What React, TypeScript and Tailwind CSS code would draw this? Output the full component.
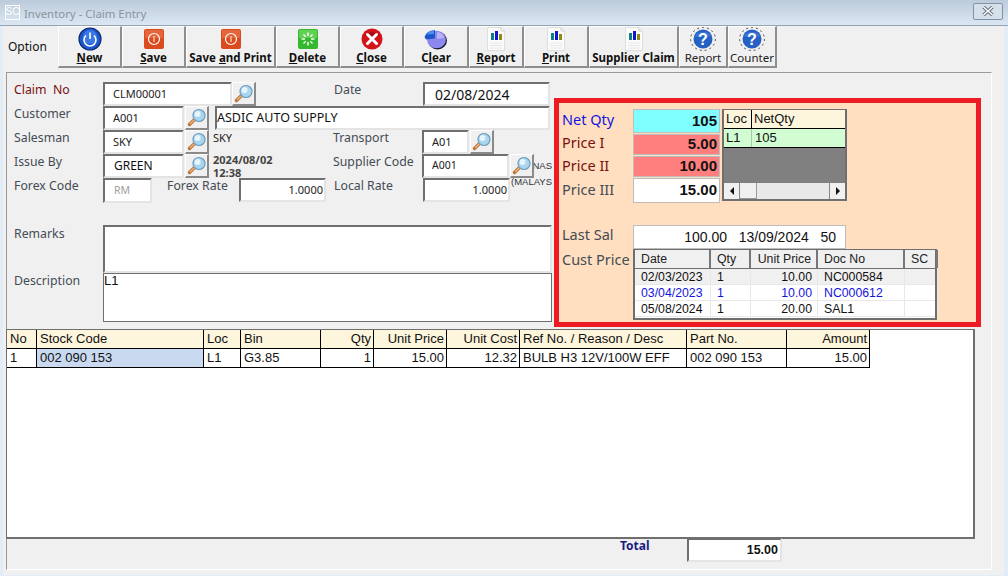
import React from "react";

const tahoma = "font-['Noto_Sans',sans-serif]";
const arial = "font-['Liberation_Sans',sans-serif]";

const sunken = "border-t-2 border-l-2 border-t-[#6f6f6f] border-l-[#6f6f6f] border-r-2 border-b-2 border-r-[#e4e4e4] border-b-[#e4e4e4]";

function Lens() {
  return (
    <svg width="20" height="20" viewBox="0 0 20 20">
      <path d="M8 11 L2.5 16.5" stroke="#b9773a" strokeWidth="3.4" strokeLinecap="round" />
      <path d="M7.5 11.5 L3.5 15.5" stroke="#f0b67c" strokeWidth="1.2" strokeLinecap="round" />
      <circle cx="12" cy="7.5" r="6" fill="#a9d6ee" stroke="#6d9dbd" strokeWidth="1.2" />
      <circle cx="10.5" cy="6" r="3" fill="#e6f5fc" />
    </svg>
  );
}

function Look({ w = "w-[24px]", h = "h-[24px]", cls = "" }: { w?: string; h?: string; cls?: string }) {
  return (
    <div className={`${w} ${h} ${cls} shrink-0 flex items-center justify-center bg-[#f0f0f0] border-r-2 border-b-2 border-r-[#8a8a8a] border-b-[#8a8a8a] border-t border-l border-t-white border-l-white`}>
      <Lens />
    </div>
  );
}

function Field({ w, h = "h-[24px]", text, cls = "", align = "" }: { w: string; h?: string; text?: string; cls?: string; align?: string }) {
  return (
    <div className={`${w} ${h} ${sunken} bg-white shrink-0 flex items-center overflow-hidden whitespace-nowrap ${align} ${cls}`}>
      {text}
    </div>
  );
}

function Label({ w, text, cls = "text-[#444c55]", top = "pt-[0px]" }: { w: string; text: string; cls?: string; top?: string }) {
  return <div className={`${w} ${top} shrink-0 ${tahoma} text-[12.3px] leading-[16px] whitespace-pre ${cls}`}>{text}</div>;
}

function PowerIcon() {
  return (
    <svg width="24" height="24" viewBox="0 0 24 24">
      <circle cx="12" cy="12" r="11" fill="#1e58d0" stroke="#0c2a70" strokeWidth="1.2" />
      <circle cx="12" cy="10" r="7" fill="#4f8df0" opacity="0.6" />
      <path d="M8 8.5 A6 6 0 1 0 16 8.5" fill="none" stroke="#fff" strokeWidth="1.6" />
      <path d="M12 5.5 V12" stroke="#fff" strokeWidth="1.6" />
    </svg>
  );
}
function SaveIcon() {
  return (
    <svg width="20" height="20" viewBox="0 0 20 20">
      <rect x="0" y="0" width="20" height="20" rx="2" fill="#dc4a1f" />
      <rect x="1" y="1" width="18" height="8" rx="1" fill="#ec7a50" opacity="0.6" />
      <circle cx="10" cy="10" r="5.5" fill="none" stroke="#fff" strokeWidth="1.2" />
      <path d="M10 7 V13" stroke="#f7c9b5" strokeWidth="1.4" />
    </svg>
  );
}
function DeleteIcon() {
  return (
    <svg width="20" height="20" viewBox="0 0 20 20">
      <rect x="0" y="0" width="20" height="20" rx="2" fill="#35b82e" />
      <rect x="1" y="1" width="18" height="8" rx="1" fill="#7fe070" opacity="0.6" />
      <g stroke="#fff" strokeWidth="1.4">
        <path d="M10 3.5 V7" /><path d="M10 13 V16.5" /><path d="M3.5 10 H7" /><path d="M13 10 H16.5" />
        <path d="M5.5 5.5 L7.7 7.7" /><path d="M14.5 5.5 L12.3 7.7" /><path d="M5.5 14.5 L7.7 12.3" /><path d="M14.5 14.5 L12.3 12.3" />
      </g>
    </svg>
  );
}
function CloseIcon() {
  return (
    <svg width="22" height="22" viewBox="0 0 22 22">
      <circle cx="11" cy="11" r="10.5" fill="#d3141a" />
      <path d="M3 8 A9 7 0 0 1 19 8 Z" fill="#a30d12" />
      <path d="M6.5 6.5 L15.5 15.5 M15.5 6.5 L6.5 15.5" stroke="#fff" strokeWidth="3" strokeLinecap="round" />
    </svg>
  );
}
function PieIcon() {
  return (
    <svg width="24" height="21" viewBox="0 0 24 21">
      <ellipse cx="13.5" cy="11.5" rx="9.5" ry="9" fill="#14142e" />
      <ellipse cx="12.5" cy="10.5" rx="9.5" ry="8.8" fill="#8d88ee" />
      <path d="M13 3 A8 7 0 0 1 20 9 L13 10 Z" fill="#b7b3f6" />
      <path d="M11 9.5 L11 1 A12 9 0 0 0 0.5 8 L2 10.5 Z" fill="#1d55c8" />
      <path d="M10 5 L10 1.5 A10 7 0 0 0 2.5 5.5 Z" fill="#4a90f0" />
    </svg>
  );
}
function ReportIcon() {
  return (
    <svg width="18" height="24" viewBox="0 0 18 24">
      <path d="M0.5 0.5 H14 L17.5 4 V23.5 H0.5 Z" fill="#fbfbfb" stroke="#dedede" />
      <path d="M14 0.5 V4 H17.5" fill="none" stroke="#d0d0d0" />
      <rect x="4" y="6" width="3" height="7" fill="#0b7f7f" />
      <rect x="8" y="4" width="3" height="9" fill="#1414d8" />
      <rect x="12" y="7" width="3" height="6" fill="#8c8c10" />
      <path d="M3 16 H15 M3 18.5 H15 M3 21 H15" stroke="#e6e6e6" />
    </svg>
  );
}
function HelpIcon() {
  return (
    <svg width="26" height="24" viewBox="0 0 26 24">
      <ellipse cx="13" cy="12" rx="12.4" ry="11.5" fill="none" stroke="#4a4a4a" strokeWidth="1" strokeDasharray="2 3" />
      <circle cx="13" cy="12" r="9.5" fill="#2560c4" />
      <path d="M4.5 9.5 A9.5 8 0 0 1 21.5 9.5 Z" fill="#4b86e0" opacity="0.6" />
      <text x="13" y="17.5" textAnchor="middle" fontSize="16" fontWeight="bold" fill="#fff" fontFamily="'Liberation Sans',sans-serif">?</text>
    </svg>
  );
}

function Btn({ w, icon, label, u, bold = true }: { w: string; icon: React.ReactNode; label?: string; u?: [string, string, string]; bold?: boolean }) {
  return (
    <div className={`${w} h-full shrink-0 flex flex-col items-center bg-[#f0f0f0] border-t border-l border-t-white border-l-white border-r-2 border-b-2 border-r-[#8e8e8e] border-b-[#8e8e8e]`}>
      <div className="h-[24px] shrink-0 flex items-center justify-center">{icon}</div>
      <div className={`${tahoma} text-[11.5px] leading-[14px] shrink-0 whitespace-pre ${bold ? "font-bold text-[#111]" : "text-[#222]"}`}>
        {u ? (<>{u[0]}<span className="underline">{u[1]}</span>{u[2]}</>) : label}
      </div>
    </div>
  );
}

const gridCols = [
  ["w-[30px]", "No", "1", ""],
  ["w-[167px]", "Stock Code", "002 090 153", ""],
  ["w-[37px]", "Loc", "L1", ""],
  ["w-[80px]", "Bin", "G3.85", ""],
  ["w-[53px]", "Qty", "1", "r"],
  ["w-[73px]", "Unit Price", "15.00", "r"],
  ["w-[73px]", "Unit Cost", "12.32", "r"],
  ["w-[167px]", "Ref No. / Reason / Desc", "BULB H3 12V/100W EFF", ""],
  ["w-[100px]", "Part No.", "002 090 153", ""],
  ["w-[83px]", "Amount", "15.00", "r"],
];

const custCols = [
  ["w-[76px]", "Date", ""],
  ["w-[40px]", "Qty", ""],
  ["w-[67px]", "Unit Price", "r"],
  ["w-[87px]", "Doc No", ""],
  ["w-[33px]", "SC", ""],
];
const custRows = [
  { c: "text-[#111] bg-[#f0f0f0]", v: ["02/03/2023", "1", "10.00", "NC000584", ""] },
  { c: "text-[#1414e0] bg-white", v: ["03/04/2023", "1", "10.00", "NC000612", ""] },
  { c: "text-[#111] bg-white", v: ["05/08/2024", "1", "20.00", "SAL1", ""] },
];

function PriceRow({ label, labelCls, h, value, bg, top }: { label: string; labelCls: string; h: string; value: string; bg: string; top: string }) {
  return (
    <div className={`flex ${h}`}>
      <div className={`w-[71px] shrink-0 ${tahoma} text-[14.5px] leading-[18px] ${top} whitespace-pre ${labelCls}`}>{label}</div>
      <div className={`w-[87px] ${h} ${bg} border border-[#bdbdbd] flex items-center justify-end pr-[2px] ${arial} font-bold text-[15px] text-[#111]`}>{value}</div>
    </div>
  );
}

export default function App() {
  return (
    <div className="w-[1008px] h-[576px] overflow-hidden flex flex-col bg-[#e3edf8]">
      {/* title */}
      <div className="h-[26px] shrink-0 flex items-center justify-between bg-gradient-to-b from-[#bccbdb] to-[#dbe7f3] border-b border-b-[#95a3b1] pl-[5px] pr-[5px]">
        <div className="flex items-center gap-[4px]">
          <div className={`w-[15px] h-[15px] border border-white flex items-center justify-center ${arial} text-[10px] leading-none text-white`}>SC</div>
          <div className={`${tahoma} text-[11.4px] pt-[2px] text-[#8a949e]`}>Inventory - Claim Entry</div>
        </div>
        <div className="w-[30px] h-[17px] -mt-[3px] border border-[#8094a8] rounded-[2px] bg-[#d5e0ea] flex items-center justify-center">
          <svg width="12" height="10" viewBox="0 0 12 10"><path d="M1.5 1 L10.5 9 M10.5 1 L1.5 9" stroke="#5c6b78" strokeWidth="3.4" /><path d="M1.5 1 L10.5 9 M10.5 1 L1.5 9" stroke="#fff" strokeWidth="1.6" /></svg>
        </div>
      </div>
      {/* body */}
      <div className="ml-[3px] w-[1001px] h-[549px] shrink-0 bg-[#f0f0f0] flex flex-col">
        {/* toolbar */}
        <div className="h-[42px] shrink-0 flex items-stretch">
          <div className={`w-[55px] shrink-0 ${tahoma} text-[12px] text-[#111] pl-[5px] pt-[12px]`}>Option</div>
          <Btn w="w-[64px]" icon={<PowerIcon />} u={["", "N", "ew"]} />
          <Btn w="w-[64px]" icon={<SaveIcon />} u={["", "S", "ave"]} />
          <Btn w="w-[90px]" icon={<SaveIcon />} u={["Save ", "a", "nd Print"]} />
          <Btn w="w-[64px]" icon={<DeleteIcon />} u={["", "D", "elete"]} />
          <Btn w="w-[64px]" icon={<CloseIcon />} u={["", "C", "lose"]} />
          <Btn w="w-[65px]" icon={<PieIcon />} u={["C", "l", "ear"]} />
          <Btn w="w-[55px]" icon={<ReportIcon />} u={["", "R", "eport"]} />
          <Btn w="w-[65px]" icon={<ReportIcon />} u={["", "P", "rint"]} />
          <Btn w="w-[90px]" icon={<ReportIcon />} label="Supplier Claim" />
          <Btn w="w-[49px]" icon={<HelpIcon />} label="Report" bold={false} />
          <Btn w="w-[49px]" icon={<HelpIcon />} label="Counter" bold={false} />
        </div>
        {/* sunken panel */}
        <div className="mt-[4px] ml-[3px] w-[986px] h-[498px] shrink-0 border border-t-[#9a9a9a] border-l-[#9a9a9a] border-r-white border-b-white flex flex-col">
          {/* form */}
          <div className="h-[256px] shrink-0 flex">
            <div className="w-[547px] shrink-0 pt-[9px] flex flex-col">
              <div className="h-[24px] flex">
                <Label w="w-[96px] pl-[7px]" text="Claim  No" cls="text-[#7a1010]" />
                <Field w="w-[129px]" text="CLM00001" cls={`${tahoma} text-[11px] pl-[8px] text-[#222]`} />
                <Look />
                <Label w="w-[89px] ml-[78px]" text="Date" />
                <Field w="w-[127px]" text="02/08/2024" cls={`${tahoma} text-[14px] pl-[10px] text-[#111]`} />
              </div>
              <div className="h-[24px] flex">
                <Label w="w-[96px] pl-[7px]" text="Customer" />
                <Field w="w-[81px]" text="A001" cls={`${tahoma} text-[11px] pl-[8px] text-[#222]`} />
                <Look cls="ml-[1px]" />
                <Field w="w-[335px] ml-[6px]" text="ASDIC AUTO SUPPLY" cls={`${tahoma} text-[12.5px] pl-[0px] text-[#111]`} />
              </div>
              <div className="h-[24px] flex">
                <Label w="w-[96px] pl-[7px]" text="Salesman" />
                <Field w="w-[81px]" text="SKY" cls={`${tahoma} text-[11px] pl-[8px] text-[#222]`} />
                <Look cls="ml-[1px]" />
                <div className={`w-[120px] shrink-0 ml-[4px] pt-[1px] ${tahoma} text-[11px] leading-[14px] text-[#222]`}>SKY</div>
                <Label w="w-[89px]" text="Transport" />
                <Field w="w-[47px]" text="A01" cls={`${tahoma} text-[11px] pl-[8px] text-[#222]`} />
                <Look cls="ml-[1px]" />
              </div>
              <div className="h-[24px] flex">
                <Label w="w-[96px] pl-[7px]" text="Issue By" />
                <Field w="w-[81px]" text="GREEN" cls={`${tahoma} text-[12px] pl-[9px] text-[#111]`} />
                <Look cls="ml-[1px]" />
                <div className={`w-[120px] shrink-0 ml-[4px] -mt-[1px] ${tahoma} font-bold text-[11px] leading-[13px] text-[#444]`}>2024/08/02<br />12:38</div>
                <Label w="w-[89px]" text="Supplier Code" />
                <Field w="w-[87px]" text="A001" cls={`${tahoma} text-[10.5px] pl-[8px] text-[#222]`} />
                <Look cls="ml-[1px]" />
                <div className={`w-[18px] shrink-0 h-[24px] pt-[7px] flex justify-end overflow-hidden ${arial} text-[9.5px] leading-[10px] text-[#333] whitespace-pre`}>ONAS</div>
              </div>
              <div className="h-[24px] flex">
                <Label w="w-[96px] pl-[7px]" text="Forex Code" />
                <Field w="w-[49px]" h="h-[25px]" text="RM" cls={`${tahoma} text-[10.5px] pl-[9px] text-[#a0a0a0]`} />
                <Label w="w-[87px] pl-[15px]" text="Forex Rate" />
                <Field w="w-[87px]" text="1.0000" align="justify-end" cls={`${tahoma} text-[11px] pr-[1px] text-[#222]`} />
                <Label w="w-[97px] pl-[8px]" text="Local Rate" />
                <Field w="w-[87px]" text="1.0000" align="justify-end" cls={`${tahoma} text-[11px] pr-[1px] text-[#222]`} />
                <div className={`pl-[1px] -mt-[1px] ${arial} text-[9.5px] leading-[10px] text-[#333] whitespace-pre`}>(MALAYS</div>
              </div>
              <div className="h-[23px]" />
              <div className="flex h-[48px]">
                <Label w="w-[96px] pl-[7px]" top="pt-[1px]" text="Remarks" />
                <Field w="w-[449px]" h="h-[48px]" />
              </div>
              <div className="flex h-[49px]">
                <Label w="w-[96px] pl-[7px]" text="Description" />
                <div className={`w-[449px] h-[49px] border border-[#6f6f6f] bg-white ${arial} text-[13px] leading-[14px] text-[#111]`}>L1</div>
              </div>
            </div>
            {/* red panel */}
            <div className="w-[427px] h-[229px] mt-[25px] shrink-0 border-[5px] border-[#ed1c24] bg-[#ffdfbf] pt-[6px] flex flex-col">
              <div className="flex gap-[2px]">
                <div className="flex flex-col gap-[1px] pl-[3px]">
                  <PriceRow label="Net Qty" labelCls="text-[#1414e0]" h="h-[24px]" value="105" bg="bg-[#7fffff]" top="pt-[1px]" />
                  <PriceRow label="Price I" labelCls="text-[#7a1010] -mt-[1px]" h="h-[21px]" value="5.00" bg="bg-[#ff7f7f]" top="pt-[0px]" />
                  <PriceRow label="Price II" labelCls="text-[#7a1010]" h="h-[21px]" value="10.00" bg="bg-[#ff7f7f]" top="pt-[0px]" />
                  <PriceRow label="Price III" labelCls="text-[#444c55]" h="h-[25px]" value="15.00" bg="bg-white" top="pt-[2px]" />
                </div>
                <div className="w-[125px] h-[92px] border-2 border-t border-[#6f6f6f] bg-[#808080] flex flex-col">
                  <div className={`h-[19px] flex bg-[#fdf5dc] border-b border-b-black ${arial} text-[13px] leading-[18px] text-[#111]`}>
                    <div className="w-[28px] pl-[2px] border-r border-r-black">Loc</div>
                    <div className="pl-[2px]">NetQty</div>
                  </div>
                  <div className={`h-[19px] flex bg-[#d2fdd2] border-b border-b-black ${arial} text-[13px] leading-[17px] text-[#111]`}>
                    <div className="w-[28px] pl-[2px] border-r border-r-[#a8c8a8]">L1</div>
                    <div className="pl-[3px]">105</div>
                  </div>
                  <div className="flex-1" />
                  <div className="h-[16px] flex items-stretch bg-[#e9e9e9]">
                    <div className="w-[16px] bg-[#f0f0f0] border-r border-r-[#888] flex items-center justify-center">
                      <svg width="6" height="8" viewBox="0 0 6 8"><path d="M5 0 L1 4 L5 8 Z" fill="#111" /></svg>
                    </div>
                    <div className="w-[17px] bg-[#f0f0f0] border-r border-b border-r-[#999] border-b-[#999]" />
                    <div className="flex-1" />
                    <div className="w-[16px] bg-[#f0f0f0] border-l border-l-[#888] flex items-center justify-center">
                      <svg width="6" height="8" viewBox="0 0 6 8"><path d="M1 0 L5 4 L1 8 Z" fill="#111" /></svg>
                    </div>
                  </div>
                </div>
              </div>
              <div className="h-[22px]" />
              <div className="flex">
                <div className="w-[74px] shrink-0 flex flex-col pl-[3px]">
                  <div className={`h-[24px] ${tahoma} text-[14.5px] leading-[18px] text-[#444c55] whitespace-pre`}>Last Sal</div>
                  <div className={`pt-[1px] ${tahoma} text-[14.5px] leading-[18px] text-[#444c55] whitespace-pre`}>Cust Price</div>
                </div>
                <div className="flex flex-col">
                  <div className={`w-[213px] h-[24px] border border-[#bdbdbd] bg-white flex items-center justify-end pr-[9px] ${arial} text-[14px] text-[#111] whitespace-pre`}>100.00   13/09/2024   50</div>
                  <div className={`w-[304px] h-[71px] border-2 border-t border-[#6f6f6f] bg-white ${arial} text-[12.3px]`}>
                    <div className="h-[19px] flex border-b border-b-[#6f6f6f] bg-[#f0f0f0]">
                      {custCols.map((c) => (
                        <div key={c[1]} className={`${c[0]} shrink-0 border-r-2 border-r-[#777] px-[6px] leading-[18px] text-[#222] whitespace-nowrap ${c[2] === "r" ? "text-right pr-[5px]" : ""}`}>{c[1]}</div>
                      ))}
                    </div>
                    {custRows.map((r, i) => (
                      <div key={i} className={`h-[16px] flex border-b border-b-[#e8e8e8] ${r.c}`}>
                        {custCols.map((c, j) => (
                          <div key={j} className={`${c[0]} shrink-0 border-r border-r-[#e8e8e8] px-[6px] leading-[16px] whitespace-nowrap ${c[2] === "r" ? "text-right pr-[5px]" : ""}`}>{r.v[j]}</div>
                        ))}
                      </div>
                    ))}
                  </div>
                </div>
              </div>
            </div>
          </div>
          {/* grid */}
          <div className="-ml-[1px] w-[969px] h-[210px] shrink-0 border-t border-l border-r-2 border-b-2 border-[#6f6f6f] bg-white">
            <div className={`flex ${arial} text-[13px] text-[#111]`}>
              {gridCols.map((c) => (
                <div key={c[1]} className={`${c[0]} shrink-0 h-[19px] bg-[#fdf5dc] border-r border-b border-black leading-[18px] px-[2px] whitespace-nowrap ${c[3] === "r" ? "text-right" : "pl-[3px]"}`}>{c[1]}</div>
              ))}
            </div>
            <div className={`flex ${arial} text-[13px] text-[#111]`}>
              {gridCols.map((c) => (
                <div key={c[1]} className={`${c[0]} shrink-0 h-[19px] border-r border-b border-black leading-[18px] px-[2px] whitespace-nowrap ${c[3] === "r" ? "text-right" : "pl-[3px]"} ${c[1] === "Stock Code" ? "bg-[#c8d9f0]" : ""}`}>{c[2]}</div>
              ))}
            </div>
          </div>
          {/* footer */}
          <div className="h-[24px] shrink-0 flex pl-[613px]">
            <div className={`w-[67px] shrink-0 ${tahoma} font-bold text-[12px] leading-[14px] text-[#1a1a80]`}>Total</div>
            <Field w="w-[95px]" text="15.00" align="justify-end" cls={`${arial} font-bold text-[12.5px] pr-[2px] text-[#111] -mt-[1px]`} />
          </div>
        </div>
      </div>
    </div>
  );
}
